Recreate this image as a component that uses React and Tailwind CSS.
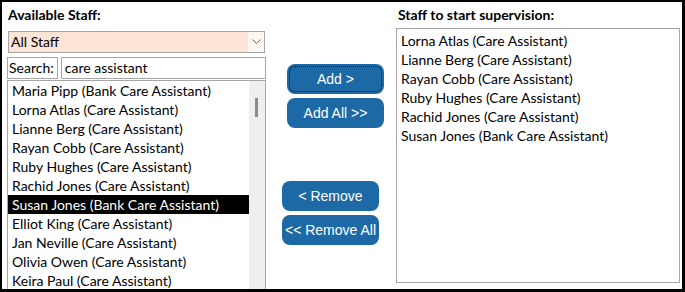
import React, { useState } from 'react';

const available = [
  'Maria Pipp (Bank Care Assistant)',
  'Lorna Atlas (Care Assistant)',
  'Lianne Berg (Care Assistant)',
  'Rayan Cobb (Care Assistant)',
  'Ruby Hughes (Care Assistant)',
  'Rachid Jones (Care Assistant)',
  'Susan Jones (Bank Care Assistant)',
  'Elliot King (Care Assistant)',
  'Jan Neville (Care Assistant)',
  'Olivia Owen (Care Assistant)',
  'Keira Paul (Care Assistant)',
];

const chosen = [
  'Lorna Atlas (Care Assistant)',
  'Lianne Berg (Care Assistant)',
  'Rayan Cobb (Care Assistant)',
  'Ruby Hughes (Care Assistant)',
  'Rachid Jones (Care Assistant)',
  'Susan Jones (Bank Care Assistant)',
];

const font = { fontFamily: 'Lato, "Open Sans", sans-serif' };

function Btn({ children, focused }) {
  return (
    <button className="relative h-[30px] w-[97px] rounded-[8px] bg-[#1c69a6] text-[14px] text-white font-['Liberation_Sans',Arial,sans-serif]">
      {focused && (
        <span className="absolute inset-[2px] rounded-[6px] border border-dotted border-[#0a1a2a]" />
      )}
      {children}
    </button>
  );
}

export default function App() {
  const [selected, setSelected] = useState(6);

  return (
    <div className="w-[685px] h-[292px] overflow-hidden bg-black">
      <div
        className="ml-[2px] mt-[2px] w-[680px] h-[287px] bg-white flex text-[14px] text-black overflow-hidden"
        style={font}
      >
        {/* available staff */}
        <div className="w-[264px] pl-[5px] flex flex-col">
          <div className="h-[29px] pt-[4px] pl-[1px] font-bold leading-[18px]">Available Staff:</div>
          <div className="ml-[1px] w-[257px] h-[22px] border border-[#a6a6a6] bg-[#fce4d6] flex items-center">
            <span className="flex-1 pl-[2px] leading-[18px]">All Staff</span>
            <span className="w-[16px] h-[20px] bg-[#fdf6f1] flex items-center justify-center">
              <svg width="9" height="6" viewBox="0 0 9 6">
                <path d="M0.5 0.5 L4.5 4.5 L8.5 0.5" fill="none" stroke="#6b6b6b" strokeWidth="1" />
              </svg>
            </span>
          </div>
          <div className="mt-[4px] flex gap-[3px] h-[22px]">
            <div className="w-[51px] border border-[#a6a6a6] pl-[1px] leading-[20px]">Search:</div>
            <div className="w-[206px] border border-[#a6a6a6] pl-[3px] leading-[20px]">care assistant</div>
          </div>
          <div className="mt-[1px] w-[259px] flex-1 border border-[#a6a6a6] border-b-0 flex overflow-hidden">
            <div className="flex-1 overflow-hidden">
              {available.map((s, i) => (
                <div
                  key={s}
                  onClick={() => setSelected(i)}
                  className={
                    'h-[19px] pl-[4px] leading-[19px] whitespace-nowrap ' +
                    (i === selected ? 'bg-black text-white' : '')
                  }
                >
                  {s}
                </div>
              ))}
            </div>
            <div className="w-[16px] bg-[#efefef] relative">
              <div className="absolute left-[6px] top-[17px] w-[3px] h-[19px] bg-[#8a8a8a]" />
            </div>
          </div>
        </div>

        {/* buttons */}
        <div className="w-[130px] flex flex-col">
          <div className="mt-[62px] ml-[21px] flex flex-col gap-[4px]">
            <Btn focused>Add &gt;</Btn>
            <Btn>Add All &gt;&gt;</Btn>
          </div>
          <div className="mt-[53px] ml-[16px] flex flex-col gap-[4px]">
            <Btn>&lt; Remove</Btn>
            <Btn>&lt;&lt; Remove All</Btn>
          </div>
        </div>

        {/* chosen staff */}
        <div className="w-[285px] flex flex-col">
          <div className="h-[26px] pt-[4px] pl-[2px] font-bold leading-[18px]">Staff to start supervision:</div>
          <div className="w-[284px] h-[255px] border border-[#a6a6a6] pt-[2px]">
            {chosen.map((s) => (
              <div key={s} className="h-[19px] pl-[4px] leading-[19px] whitespace-nowrap">
                {s}
              </div>
            ))}
          </div>
        </div>
      </div>
    </div>
  );
}
